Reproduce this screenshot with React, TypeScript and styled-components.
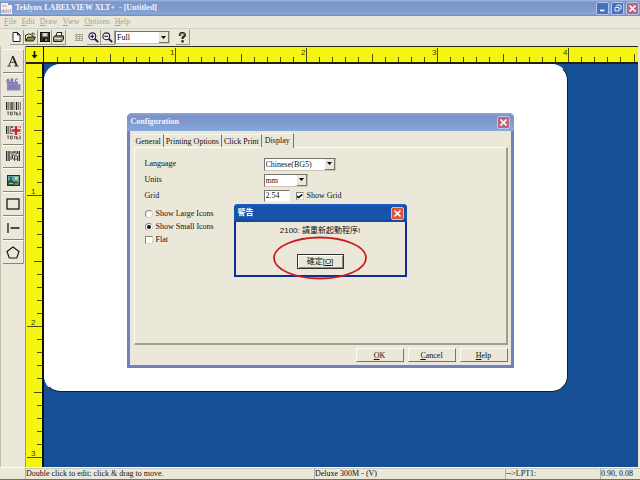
import React from 'react';
import styled, { createGlobalStyle, css } from 'styled-components';

const serif = '"Liberation Serif", "Noto Sans CJK TC", serif';
const face = '#ebe8da';
const yellow = '#f5f512';

const GlobalStyle = createGlobalStyle`
  * { box-sizing: border-box; }
  html, body { margin: 0; height: 100%; overflow: hidden; }
  body { background: ${face}; font: 8px/12px ${serif}; color: #111; }
  button, input, select { font: inherit; color: inherit; margin: 0; padding: 0; border-radius: 0; }
  button { background: none; border: 0; white-space: nowrap; }
  svg { display: block; flex: none; }
`;

const AppWindow = styled.div`
  height: 100vh;
  display: flex;
  flex-direction: column;
  border-bottom: 1px solid #50789a;
`;

const TitleBar = styled.header`
  flex: none;
  display: flex;
  align-items: center;
  gap: 3px;
  height: 16px;
  padding: 0 1px;
  background: linear-gradient(#a3b9e3 0, #7c96c9 2px, #7f9acb 9px, #88a6d9 14px, #7189b5 16px);
`;

const AppTitle = styled.h1`
  flex: 1;
  margin: 0;
  font-size: 8px;
  line-height: 12px;
  white-space: pre;
  color: #eef3fd;
`;

const CaptionButton = styled.button<{ $kind: 'blue' | 'muted' | 'red' }>`
  display: grid;
  place-items: center;
  width: 13px;
  height: 13px;
  margin-left: -1px;
  border: 1px solid #b4c5ea;
  border-radius: 2px;
  background: ${(p) => ({ blue: '#4670b8', muted: '#b9687c', red: '#dc5335' })[p.$kind]};
`;

const MenuBar = styled.nav`
  flex: none;
  display: flex;
  align-items: center;
  gap: 5px;
  height: 13px;
  padding: 0 4px;
  border-bottom: 1px solid #c6cfc9;
`;

const MenuItem = styled.button`
  color: #a5a296;
  line-height: 12px;
`;

const ToolBar = styled.div`
  flex: none;
  display: flex;
  align-items: center;
  height: 17px;
  padding-left: 10px;
`;

const ToolButton = styled.button<{ $gap?: number; $flat?: boolean }>`
  display: grid;
  place-items: center;
  width: 14px;
  height: 15px;
  margin-left: ${(p) => p.$gap ?? 0}px;
  border-right: 1px solid ${(p) => (p.$flat ? 'transparent' : '#9c998c')};
  border-bottom: 1px solid ${(p) => (p.$flat ? 'transparent' : '#9c998c')};
`;

const SelectFrame = styled.span<{ $w: number }>`
  position: relative;
  display: block;
  width: ${(p) => p.$w}px;
  height: 13px;
  border: 1px solid #77756b;
  border-right-color: #c9c6b8;
  border-bottom-color: #c9c6b8;
  background: #fff;
  select {
    display: block;
    appearance: none;
    width: 100%;
    height: 11px;
    padding: 0 0 0 1px;
    border: 0;
    background: transparent;
    line-height: 11px;
    outline: none;
  }
`;

const DropArrow = styled.span`
  position: absolute;
  top: 0;
  right: 0;
  display: grid;
  place-items: center;
  width: 10px;
  height: 11px;
  background: ${face};
  border-right: 1px solid #77756b;
  border-bottom: 1px solid #77756b;
  pointer-events: none;
`;

const Workspace = styled.main`
  flex: 1;
  min-height: 0;
  display: flex;
  padding-right: 2px;
`;

const Palette = styled.aside`
  flex: none;
  width: 26px;
  padding: 3px 1px 0 2px;
  border-left: 1px solid #c4c1b4;
  border-right: 1px solid #9a978a;
`;

const PaletteGrid = styled.div`
  display: grid;
  grid-auto-rows: 1fr;
  height: 215px;
`;

const PaletteButton = styled.button`
  display: grid;
  place-items: center;
  width: 100%;
  border-right: 1px solid #a3a093;
  border-bottom: 1px solid #88857a;
  border-top: 1px solid #fbfaf4;
`;

const Board = styled.section`
  flex: 1;
  min-width: 0;
  display: grid;
  grid-template-columns: 18px 1fr;
  grid-template-rows: 17px 1fr;
  border-top: 1px solid #2a2a10;
`;

const Corner = styled.div`
  display: grid;
  place-items: center;
  background: ${yellow};
  border-right: 1px solid #111;
  border-bottom: 2px solid #222208;
`;

const TopRuler = styled.div`
  overflow: hidden;
  background: ${yellow};
  border-bottom: 2px solid #222208;
`;

const SideRuler = styled.div`
  min-height: 0;
  overflow: hidden;
  background: ${yellow};
  border-right: 2px solid #111;
`;

const Canvas = styled.div`
  min-height: 0;
  overflow: hidden;
  background: #174f96;
`;

const LabelSheet = styled.div`
  width: 524px;
  height: 328px;
  background: #fff;
  border: 1px solid #0b1f3d;
  border-top-color: #fff;
  border-left-color: #fff;
  border-radius: 16px;
`;

const StatusBar = styled.footer`
  flex: none;
  display: grid;
  grid-template-columns: 288fr 190fr 94fr 40fr;
  gap: 1px;
  height: 12px;
  padding-left: 25px;
  border-top: 1px solid #faf9f2;
  span {
    border-left: 1px solid #b5b2a4;
    border-top: 1px solid #c9c6b8;
    line-height: 10px;
    white-space: nowrap;
  }
`;

const ModalLayer = styled.div<{ $level: number }>`
  position: fixed;
  inset: 0;
  z-index: ${(p) => p.$level};
  display: grid;
  place-items: center;
  padding-top: 1px;
`;

const dialogBase = css`
  display: flex;
  flex-direction: column;
  background: ${face};
`;

const ConfigDialog = styled.section`
  ${dialogBase}
  width: 387px;
  border: 3px solid #7480bd;
  border-top: 0;
  border-radius: 5px 5px 0 0;
  padding-bottom: 3px;
`;

const ConfigTitle = styled.header`
  display: flex;
  align-items: center;
  justify-content: space-between;
  height: 18px;
  margin: 0 -3px;
  padding: 0 4px;
  border-radius: 5px 5px 0 0;
  background: linear-gradient(#8fa5da 0, #7b91c9 3px, #7f9bcf 10px, #86a9db 18px);
  h2 { margin: 0; font-size: 8px; line-height: 12px; color: #f0f4fd; }
`;

const TabList = styled.div`
  display: flex;
  align-items: flex-end;
  height: 16px;
  padding: 0 4px;
`;

const Tab = styled.button<{ $active?: boolean }>`
  height: ${(p) => (p.$active ? 15 : 13)}px;
  padding: ${(p) => (p.$active ? '0 3px 2px' : '0 2px')};
  margin-bottom: ${(p) => (p.$active ? -1 : 0)}px;
  z-index: 1;
  background: ${face};
  border-right: 1px solid #77756b;
  border-top: 1px solid #f8f7ef;
  line-height: 11px;
`;

const TabPane = styled.div`
  display: flex;
  flex-direction: column;
  height: 198px;
  margin: 0 3px 0 4px;
  padding: 8px 10px;
  border: 1px solid #fbfaf3;
  border-right: 2px solid #a19e90;
  border-bottom: 2px solid #a19e90;
`;

const FieldRow = styled.div`
  display: grid;
  grid-template-columns: 119px auto auto 1fr;
  align-items: center;
  height: 16px;
`;

const TextBox = styled.input`
  width: 26px;
  height: 12px;
  padding-left: 1px;
  border: 1px solid #77756b;
  border-right-color: #f8f7ef;
  border-bottom-color: #f8f7ef;
  background: #fff;
  outline: none;
`;

const Choice = styled.label<{ $inset?: boolean }>`
  display: flex;
  align-items: center;
  gap: 3px;
  height: 13px;
  margin-left: ${(p) => (p.$inset ? 6 : 0)}px;
  input {
    appearance: none;
    display: grid;
    place-items: center;
    width: 8px;
    height: 8px;
    background: #fff;
    border: 1px solid #85827a;
    border-right-color: #d8d5c8;
    border-bottom-color: #d8d5c8;
  }
  input[type='radio'] { border-radius: 50%; }
  input[type='radio']:checked::before {
    content: '';
    width: 4px;
    height: 4px;
    border-radius: 50%;
    background: #111;
  }
  input[type='checkbox']:checked::before {
    content: '';
    width: 6px;
    height: 5px;
    background: #111;
    clip-path: polygon(0 30%, 35% 60%, 100% 0, 100% 40%, 35% 100%, 0 70%);
  }
`;

const ChoiceList = styled.div`
  display: flex;
  flex-direction: column;
  margin-top: 3px;
`;

const ButtonRow = styled.footer`
  display: flex;
  justify-content: flex-end;
  gap: 4px;
  padding: 3px 3px 0;
`;

const PushButton = styled.button`
  width: 48px;
  height: 14px;
  line-height: 11px;
  border: 1px solid #fbfaf3;
  border-right-color: #77756b;
  border-bottom-color: #77756b;
  background: ${face};
`;

const AlertDialog = styled.section`
  ${dialogBase}
  position: relative;
  width: 173px;
  height: 73px;
  align-items: center;
  border: 2px solid #0d2f8f;
  border-top: 0;
  border-radius: 4px 4px 0 0;
  font-family: "Liberation Sans", "Noto Sans CJK TC", sans-serif;
`;

const AlertTitle = styled.header`
  display: flex;
  align-items: center;
  justify-content: space-between;
  width: 173px;
  height: 18px;
  padding: 0 3px 0 4px;
  border-radius: 4px 4px 0 0;
  background: linear-gradient(#1c5fc4 0, #1651a8 3px, #1755ad 14px, #12479a 18px);
  h2 { margin: 0; font-size: 8px; line-height: 12px; color: #fff; }
`;

const AlertText = styled.p`
  margin: 3px 0 0;
  line-height: 12px;
`;

const AlertButton = styled.button`
  width: 47px;
  height: 15px;
  margin-top: 17px;
  border: 1px solid #333;
  box-shadow: inset 1px 1px #fff, inset -1px -1px #8d8a7c;
  background: ${face};
  line-height: 12px;
`;

const MarkerRing = styled.svg`
  position: absolute;
  left: 36px;
  top: 32px;
  pointer-events: none;
`;

const INCH = 131;

function Ruler({ vertical, inches, numbered }: { vertical?: boolean; inches: number; numbered: number }) {
  const depth = vertical ? 16 : 15;
  const length = inches * INCH;
  const ticks = Array.from({ length: inches * 10 }, (_, i) => i + 1);
  const numerals = Array.from({ length: numbered }, (_, i) => i + 1);
  return (
    <svg width={vertical ? depth : length} height={vertical ? length : depth} shapeRendering="crispEdges">
      {ticks.map((i) => {
        const at = Math.round((i * INCH) / 10) + 0.5;
        const size = i % 10 === 0 ? depth - 1 : i % 5 === 0 ? 8 : 5;
        return (
          <path
            key={i}
            d={vertical ? `M${depth - size} ${at}H${depth}` : `M${at} ${depth - size}V${depth}`}
            stroke="#4d4d10"
          />
        );
      })}
      {numerals.map((n) => (
        <text
          key={n}
          x={vertical ? 5 : n * INCH - 5}
          y={vertical ? n * INCH - 1 : 8}
          fontFamily="Liberation Sans, sans-serif"
          fontSize="8"
          fill="#3c3c10"
        >
          {n}
        </text>
      ))}
    </svg>
  );
}

function Dropdown({ label, id, width, value, options }: { label?: string; id: string; width: number; value: string; options: string[] }) {
  return (
    <SelectFrame $w={width}>
      <select id={id} aria-label={label} defaultValue={value}>
        {options.map((o) => <option key={o}>{o}</option>)}
      </select>
      <DropArrow>
        <svg width="5" height="3"><path d="M0 0H5L2.5 3Z" fill="#000" /></svg>
      </DropArrow>
    </SelectFrame>
  );
}

const CloseGlyph = () => (
  <svg width="9" height="9"><path d="M1.5 1.5L7.5 7.5M7.5 1.5L1.5 7.5" stroke="#fff" strokeWidth="1.7" /></svg>
);

const Magnifier = ({ plus }: { plus?: boolean }) => (
  <svg width="11" height="11" fill="none">
    <circle cx="4.3" cy="4.3" r="3.4" fill="#f5f5ff" stroke="#222" strokeWidth="1.1" />
    <path d="M7 7L10.2 10.2" stroke="#222" strokeWidth="1.8" />
    <path d={plus ? 'M2.4 4.3H6.2M4.3 2.4V6.2' : 'M2.4 4.3H6.2'} stroke="#1b1b90" strokeWidth="1.2" />
  </svg>
);

const BarcodeGlyph = ({ cross }: { cross?: boolean }) => (
  <svg width="15" height="15">
    <path d="M.7 1V9M6 1V9M10.5 1V9" stroke="#222" strokeWidth="1.3" />
    <path d="M2.7 1V9M4.3 1V9M8 1V9M12.4 1V9M14.3 1V9" stroke="#444" strokeWidth=".8" />
    <path d="M1 11h2M2.2 11v3M4.5 11v3h1.7v-3zM7.6 11h1.5l-.7 3M10.4 11v3h1.4v-1.6h-1.4M13 11h1.2v3h-1.2" stroke="#444" strokeWidth=".8" fill="none" />
    {cross && (
      <>
        <path d="M10 .5V10.5M5 5.5H15" stroke="#efece0" strokeWidth="5" />
        <path d="M10 1V10M5.5 5.5H14.5" stroke="#d3222c" strokeWidth="2.4" />
      </>
    )}
  </svg>
);

const paletteItems: { name: string; glyph: React.ReactNode }[] = [
  { name: 'Text', glyph: <svg width="12" height="12" stroke="#222" fill="none"><path d="M1.8 10.7L5.8 1.3" strokeWidth=".9" /><path d="M5.6 1L9.7 10.7" strokeWidth="1.9" /><path d="M3.2 7.3H8M.4 11H4M7.2 11H11.6" strokeWidth=".9" /></svg> },
  { name: 'Paragraph', glyph: (
    <svg width="15" height="13">
      <path d="M1 4H12V6H14.5V12.5H1Z" fill="#8b86bd" />
      <path d="M1 4.5V1.8L2 .9 3 1.8V4.5M1 3H3M5 .8V4.4H6.8L7.2 3.5 6.6 2.6H5M5 .8H6.6V2.6M11.8 1.4L10.9 .9 9.6 1.4V4L10.9 4.4 11.8 4" stroke="#6a65a2" fill="none" />
      <path d="M3 8h8M3 10h9" stroke="#7d78b2" />
    </svg>
  ) },
  { name: 'Barcode', glyph: <BarcodeGlyph /> },
  { name: 'Barcode wizard', glyph: <BarcodeGlyph cross /> },
  { name: '2D barcode', glyph: (
    <svg width="14" height="10">
      <path d="M.7 0V10M13.3 0V10M3 0V10" stroke="#222" strokeWidth="1.3" />
      <path d="M5 0v3M5 5v4M7 1v2M6.5 4v4M8.5 0v2M8.5 5v5M10 2v4M11.5 0v3M11.5 5v5M5 4h4M7 8h4M6 1h5" stroke="#444" />
    </svg>
  ) },
  { name: 'Picture', glyph: (
    <svg width="13" height="11">
      <rect x=".5" y=".5" width="12" height="10" fill="#63a8bd" stroke="#22302c" />
      <path d="M1 6L4 3.5 7 7 9 6 12 8V10H1Z" fill="#2e5d42" />
      <circle cx="9.3" cy="3.2" r="1.7" fill="#e3d24d" />
      <path d="M2 8.5H6M8 9H11" stroke="#c9c45e" />
      <path d="M2 3L4 1.5 5.5 3.5" fill="#264a35" />
    </svg>
  ) },
  { name: 'Box', glyph: <svg width="14" height="12"><rect x="1" y="1" width="12" height="10" fill="none" stroke="#1a1a1a" strokeWidth="1.3" /></svg> },
  { name: 'Line', glyph: <svg width="13" height="10" stroke="#1a1a1a" strokeWidth="1.3"><path d="M1 0V10M3.5 5H12.5" /></svg> },
  { name: 'Polygon', glyph: <svg width="14" height="13"><path d="M7 1L13 5.5 10.7 12H3.3L1 5.5Z" fill="none" stroke="#1a1a1a" strokeWidth="1.2" /></svg> },
];

export default function App() {
  return (
    <>
      <GlobalStyle />
      <AppWindow>
        <TitleBar>
          <svg width="11" height="12">
            <path d="M0 1H7V3H11V12H0Z" fill="#f3efe9" />
            <path d="M1 8V11M2.5 7V11M4 8V11M5.7 7V11M7.3 8V11M9.3 7V11" stroke="#a59a90" strokeWidth=".9" />
            <path d="M1 4H6" stroke="#cf9aa0" />
          </svg>
          <AppTitle>{'Teklynx LABELVIEW XLT+  - [Untitled]'}</AppTitle>
          <CaptionButton $kind="blue" aria-label="Minimize"><svg width="8" height="8"><path d="M1 6.5H5.5" stroke="#fff" strokeWidth="1.6" /></svg></CaptionButton>
          <CaptionButton $kind="blue" aria-label="Restore">
            <svg width="8" height="8" fill="none" stroke="#e7eefc"><path d="M3 2.5V1H7V5H5.5M1 3.5H5V7H1Z" /></svg>
          </CaptionButton>
          <CaptionButton $kind="muted" aria-label="Close"><CloseGlyph /></CaptionButton>
        </TitleBar>

        <MenuBar>
          {['File', 'Edit', 'Draw', 'View', 'Options', 'Help'].map((m) => (
            <MenuItem key={m}><u>{m[0]}</u>{m.slice(1)}</MenuItem>
          ))}
        </MenuBar>

        <ToolBar>
          <ToolButton aria-label="New"><svg width="9" height="10"><path d="M1 .5H5.5L8 3V9.5H1Z M5.5 .5V3H8" fill="#fff" stroke="#222" /></svg></ToolButton>
          <ToolButton aria-label="Open">
            <svg width="11" height="10"><path d="M.5 9V3H2L3 2H5L6 3H8V5" fill="#f5ef9d" stroke="#333" /><path d="M.5 9L3 5H10.5L8.5 9Z" fill="#8f8a38" stroke="#222" /><path d="M6.5 1.5Q8.5 0 9.8 2.6" fill="none" stroke="#222" /></svg>
          </ToolButton>
          <ToolButton aria-label="Save">
            <svg width="10" height="10"><rect x=".5" y=".5" width="9" height="9" fill="#333a1d" stroke="#111" /><path d="M2.5 1H7.5V4.5H2.5Z" fill="#d9d7c7" /><path d="M3 6.5H7V9H3Z" fill="#111" /><path d="M6 7V9" stroke="#eee" /></svg>
          </ToolButton>
          <ToolButton aria-label="Print">
            <svg width="11" height="10"><path d="M3 4L4 .5H9L8 4" fill="#fff" stroke="#222" /><path d="M.5 5L2 3.8H10.5V7.5L9 9.5H.5Z" fill="#8b887a" stroke="#222" /><path d="M1 6.5H8.5" stroke="#ece9da" /><path d="M5 8H7" stroke="#d8d545" /></svg>
          </ToolButton>
          <ToolButton $gap={6} $flat disabled aria-label="Grid"><svg width="8" height="8" stroke="#aaa799"><path d="M0 1.5H8M0 3.5H8M0 5.5H8M0 7.5H8M1.5 1V8M4.5 1V8M7.5 1V8" /></svg></ToolButton>
          <ToolButton $gap={1} aria-label="Zoom in"><Magnifier plus /></ToolButton>
          <ToolButton aria-label="Zoom out"><Magnifier /></ToolButton>
          <Dropdown id="zoom" label="Zoom" width={55} value="Full" options={['Full', '100%', '200%']} />
          <ToolButton $gap={6} aria-label="Help">
            <svg width="9" height="11"><path d="M2 4V2.6Q2.3 1 4.3 1 6.9 1 6.9 3 6.9 4.4 5.3 5 4.5 5.4 4.5 7" fill="none" stroke="#222" strokeWidth="2.2" /><path d="M2.3 3.4Q2.4 1.2 4.3 1.2 6.4 1.2 6.4 3" fill="none" stroke="#aaa33a" strokeWidth=".8" /><path d="M3.3 8.2H5.8V10.5H3.3Z" fill="#222" /></svg>
          </ToolButton>
        </ToolBar>

        <Workspace>
          <Palette>
            <PaletteGrid>
              {paletteItems.map((p) => <PaletteButton key={p.name} aria-label={p.name}>{p.glyph}</PaletteButton>)}
            </PaletteGrid>
          </Palette>
          <Board>
            <Corner><svg width="7" height="8"><path d="M3.5 0V5" stroke="#111" strokeWidth="1.6" /><path d="M.5 4H6.5L3.5 7.6Z" fill="#111" /></svg></Corner>
            <TopRuler><Ruler inches={12} numbered={4} /></TopRuler>
            <SideRuler><Ruler vertical inches={8} numbered={3} /></SideRuler>
            <Canvas><LabelSheet /></Canvas>
          </Board>
        </Workspace>

        <StatusBar>
          <span>Double click to edit; click &amp; drag to move.</span>
          <span>Deluxe 300M - (V)</span>
          <span>--&gt;LPT1:</span>
          <span>0.90, 0.08</span>
        </StatusBar>
      </AppWindow>

      <ModalLayer $level={1}>
        <ConfigDialog role="dialog" aria-labelledby="config-title">
          <ConfigTitle>
            <h2 id="config-title">Configuration</h2>
            <CaptionButton $kind="muted" aria-label="Close configuration"><CloseGlyph /></CaptionButton>
          </ConfigTitle>
          <TabList role="tablist">
            {['General', 'Printing Options', 'Click Print', 'Display'].map((t) => (
              <Tab key={t} role="tab" aria-selected={t === 'Display'} $active={t === 'Display'}>{t}</Tab>
            ))}
          </TabList>
          <TabPane role="tabpanel">
            <FieldRow>
              <label htmlFor="language">Language</label>
              <Dropdown id="language" width={72} value="Chinese(BG5)" options={['Chinese(BG5)', 'English']} />
            </FieldRow>
            <FieldRow>
              <label htmlFor="units">Units</label>
              <Dropdown id="units" width={44} value="mm" options={['mm', 'inch']} />
            </FieldRow>
            <FieldRow>
              <label htmlFor="grid">Grid</label>
              <TextBox id="grid" defaultValue="2.54" />
              <Choice $inset><input type="checkbox" defaultChecked />Show Grid</Choice>
            </FieldRow>
            <ChoiceList>
              <Choice><input type="radio" name="icons" />Show Large Icons</Choice>
              <Choice><input type="radio" name="icons" defaultChecked />Show Small Icons</Choice>
              <Choice><input type="checkbox" />Flat</Choice>
            </ChoiceList>
          </TabPane>
          <ButtonRow>
            {['OK', 'Cancel', 'Help'].map((b) => <PushButton key={b}><u>{b[0]}</u>{b.slice(1)}</PushButton>)}
          </ButtonRow>
        </ConfigDialog>
      </ModalLayer>

      <ModalLayer $level={2}>
        <AlertDialog role="alertdialog" aria-labelledby="alert-title">
          <AlertTitle>
            <h2 id="alert-title">警告</h2>
            <CaptionButton $kind="red" aria-label="Close alert"><CloseGlyph /></CaptionButton>
          </AlertTitle>
          <AlertText>2100: 請重新起動程序!</AlertText>
          <AlertButton>確定[<u>O</u>]</AlertButton>
          <MarkerRing width="96" height="44"><ellipse cx="48" cy="22" rx="46" ry="20.5" fill="none" stroke="#cf1a20" strokeWidth="1.8" /></MarkerRing>
        </AlertDialog>
      </ModalLayer>
    </>
  );
}
